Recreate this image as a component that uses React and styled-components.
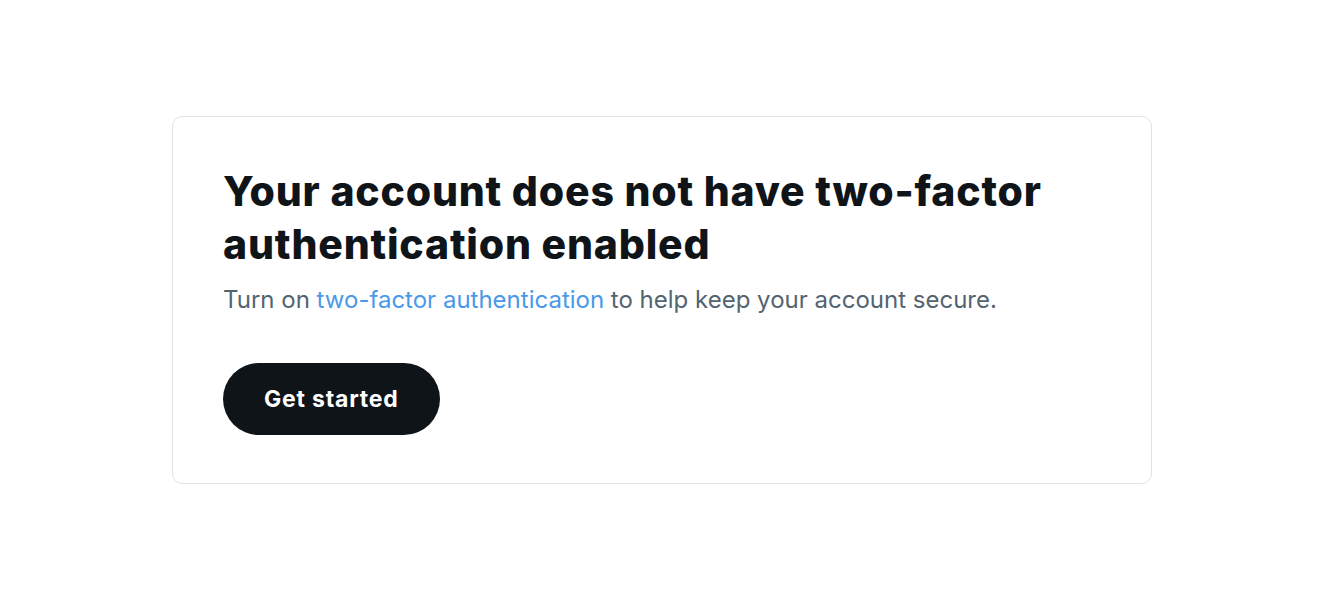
import React from 'react';
import styled, { createGlobalStyle } from 'styled-components';

const GlobalStyle = createGlobalStyle`
    html, body {
        margin: 0;
        padding: 0;
        background: #ffffff;
    }

    body {
        font-family: Inter, "Noto Sans", "Liberation Sans", sans-serif;
        -webkit-font-smoothing: antialiased;
    }
`;

const Page = styled.div`
    min-height: 100vh;
    display: flex;
    align-items: center;
    justify-content: center;
    box-sizing: border-box;
`;

const Card = styled.section`
    width: 980px;
    box-sizing: border-box;
    border: 1px solid #dfe2e5;
    border-radius: 10px;
    padding: 48px 50px 48px;
    display: flex;
    flex-direction: column;
    align-items: flex-start;
`;

const Title = styled.h2`
    margin: 0;
    font-size: 41px;
    line-height: 53px;
    font-weight: 800;
    color: #0f1419;
    letter-spacing: 0.8px;
    max-width: 860px;
`;

const Description = styled.p`
    margin: 14px 0 0;
    font-size: 24px;
    line-height: 30px;
    color: #536471;
`;

const Link = styled.a`
    color: #4a99e9;
    text-decoration: none;
`;

const PrimaryButton = styled.button`
    margin-top: 48px;
    height: 72px;
    padding: 0 41px;
    border: none;
    border-radius: 999px;
    background: #0f1419;
    color: #ffffff;
    font-family: inherit;
    font-size: 23px;
    font-weight: 700;
    letter-spacing: 0.8px;
    cursor: pointer;
`;

const TwoFactorPrompt = () => {
    return (
        <Card>
            <Title>Your account does not have two-factor authentication enabled</Title>
            <Description>
                Turn on <Link href="#">two-factor authentication</Link> to help keep your account secure.
            </Description>
            <PrimaryButton>Get started</PrimaryButton>
        </Card>
    );
};

const App = () => {
    return (
        <>
            <GlobalStyle />
            <Page>
                <TwoFactorPrompt />
            </Page>
        </>
    );
};

export default App;
